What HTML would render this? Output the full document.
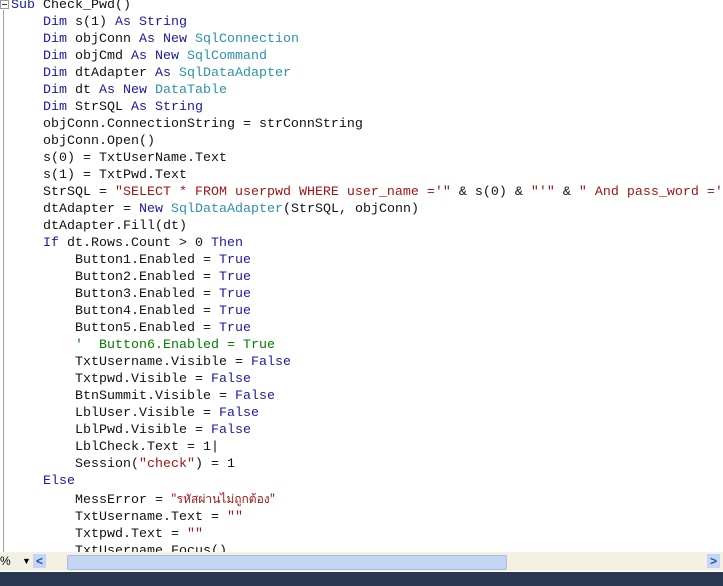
<!DOCTYPE html><html><head><meta charset="utf-8"><style>
body{margin:0;width:723px;height:586px;overflow:hidden;background:#fff;position:relative}
#code{position:absolute;left:11px;top:-3px;margin:0;font:13.33px/17px "Liberation Mono","Noto Sans CJK SC",monospace;color:#111;white-space:pre}
.k{color:#1a1aa6}.t{color:#2b91af}.s{color:#a31515}.c{color:#008000}
#gl{position:absolute;left:3px;top:10px;width:1px;height:542px;background:#a0a0a0}
#box{position:absolute;left:0;top:0;width:7px;height:7px;border:1px solid #999;background:#fff}
#box:after{content:"";position:absolute;left:1px;top:3px;width:5px;height:1px;background:#333}
#sb{position:absolute;left:0;top:552px;width:723px;height:19px;background:#f3f1e4}
#th{position:absolute;left:67px;top:555px;width:438px;height:13px;background:#c5d6f5;border:1px solid #a9bde4;border-radius:2px}
#bar{position:absolute;left:0;top:572px;width:723px;height:14px;background:#293751}
.ar{position:absolute;top:554px;width:13px;height:14px;background:#c5d6f5;color:#2a4aa8;font:bold 12px/14px "Liberation Sans",sans-serif;text-align:center}
</style></head><body>
<div id="gl"></div><div id="box"></div>
<pre id="code"><span class="k">Sub</span> Check_Pwd()
    <span class="k">Dim</span> s(1) <span class="k">As</span> <span class="k">String</span>
    <span class="k">Dim</span> objConn <span class="k">As</span> <span class="k">New</span> <span class="t">SqlConnection</span>
    <span class="k">Dim</span> objCmd <span class="k">As</span> <span class="k">New</span> <span class="t">SqlCommand</span>
    <span class="k">Dim</span> dtAdapter <span class="k">As</span> <span class="t">SqlDataAdapter</span>
    <span class="k">Dim</span> dt <span class="k">As</span> <span class="k">New</span> <span class="t">DataTable</span>
    <span class="k">Dim</span> StrSQL <span class="k">As</span> <span class="k">String</span>
    objConn.ConnectionString = strConnString
    objConn.Open()
    s(0) = TxtUserName.Text
    s(1) = TxtPwd.Text
    StrSQL = <span class="s">"SELECT * FROM userpwd WHERE user_name ='"</span> &amp; s(0) &amp; <span class="s">"'"</span> &amp; <span class="s">" And pass_word ='"</span>
    dtAdapter = <span class="k">New</span> <span class="t">SqlDataAdapter</span>(StrSQL, objConn)
    dtAdapter.Fill(dt)
    <span class="k">If</span> dt.Rows.Count &gt; 0 <span class="k">Then</span>
        Button1.Enabled = <span class="k">True</span>
        Button2.Enabled = <span class="k">True</span>
        Button3.Enabled = <span class="k">True</span>
        Button4.Enabled = <span class="k">True</span>
        Button5.Enabled = <span class="k">True</span>
        <span class="c">'  Button6.Enabled = True</span>
        TxtUsername.Visible = <span class="k">False</span>
        Txtpwd.Visible = <span class="k">False</span>
        BtnSummit.Visible = <span class="k">False</span>
        LblUser.Visible = <span class="k">False</span>
        LblPwd.Visible = <span class="k">False</span>
        LblCheck.Text = 1|
        Session(<span class="s">"check"</span>) = 1
    <span class="k">Else</span>
        MessError = <span class="s" style="font-family:'Noto Sans CJK SC','Liberation Mono',monospace;font-size:12px">"รหัสผ่านไม่ถูกต้อง"</span>
        TxtUsername.Text = <span class="s">""</span>
        Txtpwd.Text = <span class="s">""</span>
        TxtUsername.Focus()</pre>
<div id="sb"></div>
<div style="position:absolute;left:0;top:554px;font:12px/14px 'Liberation Sans',sans-serif">%</div>
<div style="position:absolute;left:22px;top:554px;font:9px/14px 'Liberation Sans',sans-serif">▼</div>
<div class="ar" style="left:33px">&lt;</div>
<div id="th"></div>
<div class="ar" style="left:707px">&gt;</div>
<div id="bar"></div>
</body></html>
